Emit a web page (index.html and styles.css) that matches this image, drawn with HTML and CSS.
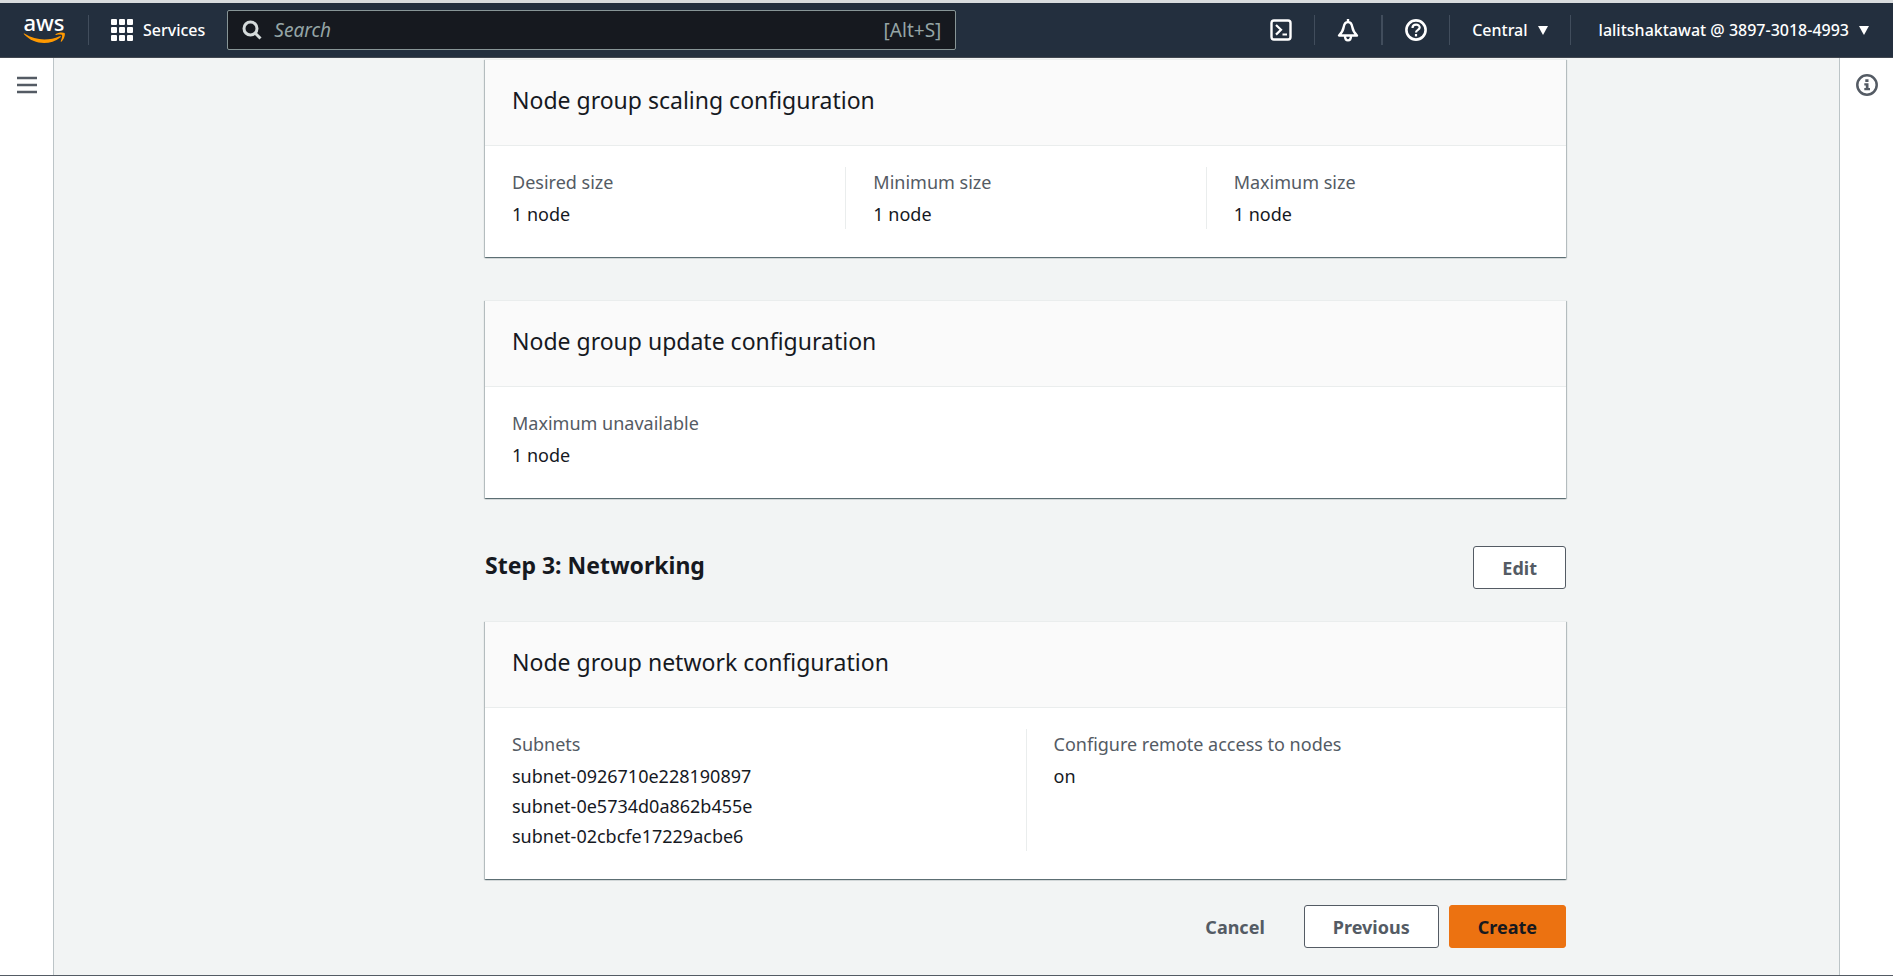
FILE: index.html
```
<!DOCTYPE html>
<html lang="en">
<head>
<meta charset="utf-8">
<meta name="viewport" content="width=device-width, initial-scale=1">
<title>Create node group</title>
<link rel="stylesheet" href="styles.css">
</head>
<body>
<header class="topnav">
  <a class="logo" href="#" aria-label="AWS home">
    <svg width="44" height="48" viewBox="0 -8 44 48" aria-hidden="true">
      <text class="logo-text" x="21" y="17" text-anchor="middle">aws</text>
      <path class="logo-smile" d="M1 20.200Q0 19.400 1.400 19.600C13 27 26 27 36.500 22.200Q39 21.200 37.200 23.400C27 31.500 11 31 1 20.200ZM32.500 20.300C35 18.300 40 18 41.600 19C42.600 20.500 41 25.500 38.400 27.700Q37.300 28.200 37.900 26.700C39 23.900 39.500 22 39 21.100C38 20.200 35.500 20.700 33.200 20.900Q32 21 32.500 20.300Z"/>
    </svg>
  </a>
  <span class="divider"></span>
  <button class="nav-button services" type="button">
    <svg width="22" height="22" viewBox="0 0 22 22" fill="currentColor" aria-hidden="true">
      <rect width="6" height="6" rx="1"/><rect x="8" width="6" height="6" rx="1"/><rect x="16" width="6" height="6" rx="1"/>
      <rect y="8" width="6" height="6" rx="1"/><rect x="8" y="8" width="6" height="6" rx="1"/><rect x="16" y="8" width="6" height="6" rx="1"/>
      <rect y="16" width="6" height="6" rx="1"/><rect x="8" y="16" width="6" height="6" rx="1"/><rect x="16" y="16" width="6" height="6" rx="1"/>
    </svg>
    <span>Services</span>
  </button>
  <label class="search">
    <svg width="20" height="20" viewBox="0 0 20 20" fill="none" stroke="currentColor" stroke-width="3" aria-hidden="true">
      <circle cx="8.500" cy="8.500" r="6.500"/><path d="M13 13l5.500 5.500"/>
    </svg>
    <input class="search-input" type="text" placeholder="Search" aria-label="Search">
    <span class="shortcut">[Alt+S]</span>
  </label>
  <nav class="tools">
    <button class="nav-button icon-button" type="button" aria-label="CloudShell">
      <svg width="22" height="22" viewBox="0 0 22 22" fill="none" stroke="currentColor" stroke-width="2.200" aria-hidden="true">
        <rect x="1.500" y="1.500" width="19" height="19" rx="2.500" stroke-width="2.400"/><path d="M6 6l5 4.800-5 4.800M12.500 15.500h4.500"/>
      </svg>
    </button>
    <span class="divider"></span>
    <button class="nav-button icon-button" type="button" aria-label="Notifications">
      <svg width="22" height="24" viewBox="0 0 22 24" fill="none" stroke="currentColor" stroke-width="2.400" stroke-linejoin="round" aria-hidden="true">
        <path d="M11 1v3M11 4C8.500 4 7.200 6 6.700 9C6 13.500 4.500 15 2 17.500H20C17.500 15 16 13.500 15.300 9C14.800 6 13.500 4 11 4ZM8 18C8 23.800 14 23.800 14 18"/>
      </svg>
    </button>
    <span class="divider divider-wide"></span>
    <button class="nav-button icon-button" type="button" aria-label="Help">
      <svg width="22" height="22" viewBox="0 0 22 22" fill="none" stroke="currentColor" stroke-width="2.200" aria-hidden="true">
        <circle cx="11" cy="11" r="9.600" stroke-width="2.600"/><path d="M7.500 9C7.500 4.500 14.700 4.500 14.700 8.600C14.700 11 11 10.800 11 13.500"/><path d="M11 15v2.400"/>
      </svg>
    </button>
    <span class="divider"></span>
    <button class="nav-button region" type="button">
      <span>Central</span>
      <svg width="10" height="9" viewBox="0 0 10 9" fill="currentColor" aria-hidden="true"><path d="M0 0H10L5 9Z"/></svg>
    </button>
    <span class="divider"></span>
    <button class="nav-button account" type="button">
      <span>lalitshaktawat @ 3897-3018-4993</span>
      <svg width="10" height="9" viewBox="0 0 10 9" fill="currentColor" aria-hidden="true"><path d="M0 0H10L5 9Z"/></svg>
    </button>
  </nav>
</header>
<div class="shell">
  <aside class="rail rail-left">
    <button class="rail-button" type="button" aria-label="Open navigation">
      <svg width="20" height="18" viewBox="0 0 20 18" fill="none" stroke="currentColor" stroke-width="2.600" aria-hidden="true"><path d="M0 2H20M0 9H20M0 16H20"/></svg>
    </button>
  </aside>
  <main class="content">
    <div class="wizard">
      <section class="card">
        <h2 class="card-title">Node group scaling configuration</h2>
        <dl class="columns three">
          <div class="field"><dt>Desired size</dt><dd>1 node</dd></div>
          <div class="field"><dt>Minimum size</dt><dd>1 node</dd></div>
          <div class="field"><dt>Maximum size</dt><dd>1 node</dd></div>
        </dl>
      </section>
      <section class="card">
        <h2 class="card-title">Node group update configuration</h2>
        <dl class="columns">
          <div class="field"><dt>Maximum unavailable</dt><dd>1 node</dd></div>
        </dl>
      </section>
      <div class="step">
        <h1 class="step-title">Step 3: Networking</h1>
        <button class="button" type="button">Edit</button>
      </div>
      <section class="card">
        <h2 class="card-title">Node group network configuration</h2>
        <dl class="columns two">
          <div class="field"><dt>Subnets</dt><dd>subnet-0926710e228190897</dd><dd>subnet-0e5734d0a862b455e</dd><dd>subnet-02cbcfe17229acbe6</dd></div>
          <div class="field"><dt>Configure remote access to nodes</dt><dd>on</dd></div>
        </dl>
      </section>
      <div class="actions">
        <button class="button link" type="button">Cancel</button>
        <button class="button" type="button">Previous</button>
        <button class="button primary" type="button">Create</button>
      </div>
    </div>
  </main>
  <aside class="rail rail-right">
    <button class="rail-button" type="button" aria-label="Open help panel">
      <svg width="22" height="22" viewBox="0 0 22 22" fill="none" stroke="currentColor" aria-hidden="true">
        <circle cx="11" cy="11" r="9.700" stroke-width="2.500"/><path d="M9.300 5.200h3.200v2.800h-3.200zM8.300 9.300h4.200v4.700h1.500v2.300H8.300V14h1.500v-2.400H8.300z" fill="currentColor" stroke="none"/>
      </svg>
    </button>
  </aside>
</div>
</body>
</html>
```
FILE: styles.css
```
* { box-sizing: border-box; }

body {
  margin: 0;
  height: 100vh;
  display: flex;
  flex-direction: column;
  overflow: hidden;
  border-top: 3px solid #d9dcde;
  border-bottom: 1px solid #545b64;
  background: #f2f4f4;
  color: #16191f;
  font-family: "Noto Sans", "Open Sans", sans-serif;
  font-size: 18px;
  line-height: 30px;
}

button, input { font: inherit; color: inherit; }

button {
  margin: 0;
  padding: 0;
  border: 0;
  background: none;
  cursor: pointer;
}

svg { display: block; flex: none; }

.topnav {
  flex: none;
  display: flex;
  align-items: center;
  height: 55px;
  border-bottom: 1px solid #414750;
  background: #232f3e;
  color: #fff;
  font-size: 16px;
  font-weight: 500;
}

.logo { margin: 0 21px 0 23px; }
.logo-text { fill: #fff; font: 500 22px "Noto Sans", sans-serif; }
.logo-smile { fill: #f90; }

.divider { flex: none; width: 1px; height: 30px; background: #414d5c; }
.divider-wide { width: 2px; }

.nav-button { display: flex; align-items: center; gap: 10px; white-space: nowrap; }
.services { margin: 0 22px; }

.search {
  flex: 0 1 729px;
  display: flex;
  align-items: center;
  gap: 12px;
  height: 40px;
  padding: 0 14px;
  border: 1px solid #879596;
  border-radius: 2px;
  background: #16191f;
  color: #d5dbdb;
  font-size: 19px;
  font-weight: 400;
}

.search-input {
  flex: 1;
  min-width: 0;
  padding: 0;
  border: 0;
  outline: 0;
  background: none;
}

.search-input::placeholder { color: #95a5a6; font-style: italic; opacity: 1; }
.shortcut { color: #95a5a6; }

.tools { display: flex; align-items: center; margin-left: auto; }
.icon-button { margin: 0 22px; }
.region { margin: 0 22px; }
.account { margin: 0 24px 0 28px; }

.shell { flex: 1; min-height: 0; display: flex; }

.rail {
  flex: none;
  width: 54px;
  padding-top: 16px;
  background: #fff;
  color: #545b64;
}

.rail-left { border-right: 1px solid #bcc4c7; }
.rail-right { border-left: 1px solid #bcc4c7; }

.rail-button { display: grid; place-items: center; width: 100%; height: 22px; }

.content { flex: 1; min-width: 0; padding-top: 1px; }

.wizard { max-width: 1239px; margin: 0 auto; padding-left: 158px; }

.card {
  margin-bottom: 43px;
  border-top: 1px solid #eaeded;
  background: #fff;
  box-shadow: 0 1px 1px 0 rgba(0, 28, 36, .4), 1px 1px 1px 0 rgba(0, 28, 36, .2), -1px 1px 1px 0 rgba(0, 28, 36, .2);
}

.card-title {
  margin: 0;
  padding: 24px 27px 29px;
  border-bottom: 1px solid #eaeded;
  background: #fafafa;
  font-size: 23px;
  font-weight: 400;
  line-height: 32px;
}

.columns { display: grid; margin: 0; padding: 21px 0 28px; }
.two { grid-template-columns: repeat(2, minmax(0, 1fr)); }
.three { grid-template-columns: repeat(3, minmax(0, 1fr)); }

.field { padding: 0 27px; }
.field + .field { border-left: 1px solid #eaeded; }
.field dt { margin-bottom: 2px; color: #545b64; }
.field dd { margin: 0; }

.step {
  display: flex;
  align-items: flex-start;
  justify-content: space-between;
  margin: 48px 0 32px;
}

.step-title { margin: 0; font-size: 23px; font-weight: 700; line-height: 38px; }

.button {
  height: 43px;
  padding: 0 28px;
  border: 1px solid #545b64;
  border-radius: 3px;
  background: #fff;
  color: #545b64;
  font-weight: 700;
}

.link { border-color: transparent; background: none; }
.primary { border-color: #ec7211; background: #ec7211; color: #16191f; }

.actions { display: flex; justify-content: flex-end; gap: 10px; margin-top: -17px; }
```
